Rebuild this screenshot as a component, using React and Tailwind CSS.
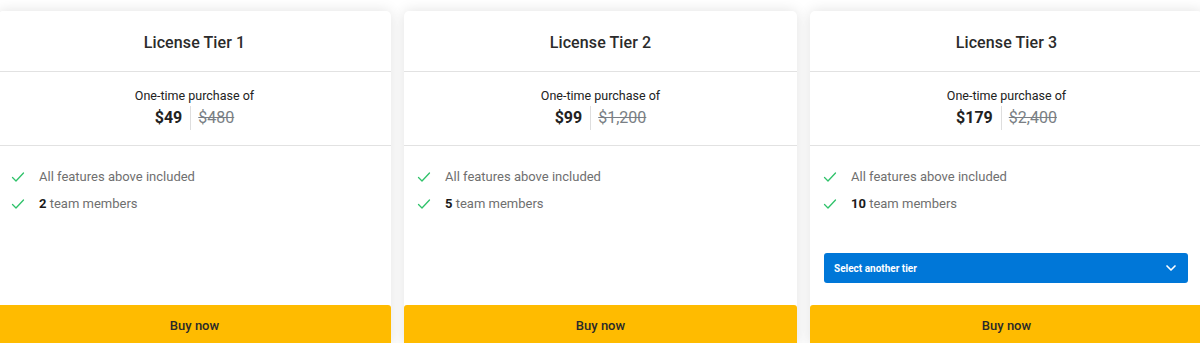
import React from 'react';
import { ChevronDown } from 'lucide-react';

const tiers = [
  { name: 'License Tier 1', price: '$49', was: '$480', members: 2 },
  { name: 'License Tier 2', price: '$99', was: '$1,200', members: 5 },
  { name: 'License Tier 3', price: '$179', was: '$2,400', members: 10, select: true },
];

function Check() {
  return (
    <svg width="14" height="14" viewBox="0 0 14 14" fill="none" className="shrink-0">
      <path d="M1.5 7.5l3.5 3.5 7.5-8" stroke="#2fc26a" strokeWidth="1.3" strokeLinecap="round" strokeLinejoin="round" />
    </svg>
  );
}

function TierCard({ tier }) {
  return (
    <div className="w-[393px] shrink-0 flex flex-col bg-white rounded-t-[5px] shadow-[0_0_14px_rgba(0,0,0,0.12)]">
      <div className="h-[61px] pt-[3px] flex items-center justify-center border-b border-[#e2e2e2]">
        <h2 className="text-[16px] font-medium text-[#2b2b2b] tracking-[0.1px]">{tier.name}</h2>
      </div>
      <div className="pt-[16px] pb-[15px] flex flex-col items-center border-b border-[#e2e2e2]">
        <p className="text-[12.5px] leading-[16px] text-[#222]">One-time purchase of</p>
        <div className="mt-[2px] flex items-center h-[24px]">
          <span className="text-[16px] font-bold text-[#222] pr-[8px]">{tier.price}</span>
          <span className="w-px h-[24px] bg-[#dedede]" />
          <span className="text-[16px] text-[#7a7f85] line-through pl-[7px]">{tier.was}</span>
        </div>
      </div>
      <div className="flex-1 px-[13px] pt-[21px] pb-[22px]">
        <ul className="flex flex-col gap-[7px]">
          <li className="flex items-center gap-[14px] h-[20px] text-[13px] text-[#6f6f6f]">
            <Check />
            <span>All features above included</span>
          </li>
          <li className="flex items-center gap-[14px] h-[20px] text-[13px] text-[#6f6f6f]">
            <Check />
            <span>
              <b className="font-bold text-[#1a1a1a]">{tier.members}</b> team members
            </span>
          </li>
        </ul>
        {tier.select && (
          <button
            type="button"
            className="mt-[39px] ml-[1px] w-[364px] h-[30px] rounded-[3px] bg-[#0077d8] flex items-center justify-between pl-[10px] pr-[9px] text-white"
          >
            <span className="text-[10px] font-bold">Select another tier</span>
            <ChevronDown size={16} strokeWidth={2.5} />
          </button>
        )}
      </div>
      <button
        type="button"
        className="h-[40px] w-full pt-[2px] rounded-t-[3px] bg-[#ffbb00] text-[13px] font-medium text-[#2a2a2a]"
      >
        Buy now
      </button>
    </div>
  );
}

export default function App() {
  return (
    <div className="w-[1200px] h-[343px] overflow-hidden bg-white" style={{ fontFamily: 'Roboto, "Noto Sans", sans-serif' }}>
      <div className="flex gap-[13px] ml-[-2px] pt-[11px]">
        {tiers.map((t) => (
          <TierCard key={t.name} tier={t} />
        ))}
      </div>
    </div>
  );
}
